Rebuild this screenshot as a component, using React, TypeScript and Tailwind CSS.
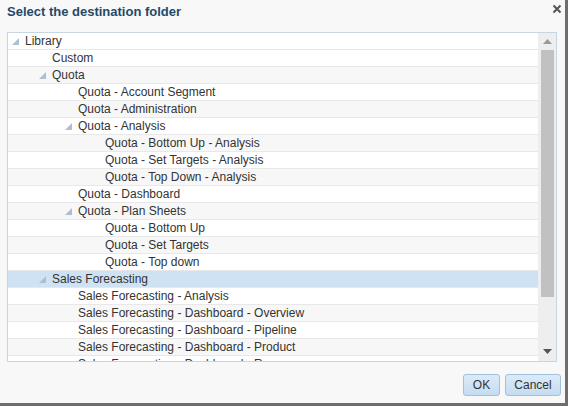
import React from "react";

type Row = { label: string; level: number; expanded?: boolean };

const rows: Row[] = [
  { label: "Library", level: 0, expanded: true },
  { label: "Custom", level: 1 },
  { label: "Quota", level: 1, expanded: true },
  { label: "Quota - Account Segment", level: 2 },
  { label: "Quota - Administration", level: 2 },
  { label: "Quota - Analysis", level: 2, expanded: true },
  { label: "Quota - Bottom Up - Analysis", level: 3 },
  { label: "Quota - Set Targets - Analysis", level: 3 },
  { label: "Quota - Top Down - Analysis", level: 3 },
  { label: "Quota - Dashboard", level: 2 },
  { label: "Quota - Plan Sheets", level: 2, expanded: true },
  { label: "Quota - Bottom Up", level: 3 },
  { label: "Quota - Set Targets", level: 3 },
  { label: "Quota - Top down", level: 3 },
  { label: "Sales Forecasting", level: 1, expanded: true },
  { label: "Sales Forecasting - Analysis", level: 2 },
  { label: "Sales Forecasting - Dashboard - Overview", level: 2 },
  { label: "Sales Forecasting - Dashboard - Pipeline", level: 2 },
  { label: "Sales Forecasting - Dashboard - Product", level: 2 },
  { label: "Sales Forecasting - Dashboard - Resources", level: 2 },
];

const levelPad = ["pl-[4px]", "pl-[31px]", "pl-[57px]", "pl-[84px]"];

function Tri() {
  return (
    <svg width="7" height="7" viewBox="0 0 7 7" className="block">
      <polygon points="7,0 7,7 0,7" fill="#aebfcf" />
    </svg>
  );
}

export default function App() {
  return (
    <div className="w-[568px] h-[406px] bg-[#6e6e6e] overflow-hidden" style={{ fontFamily: '"Liberation Sans", Arial, sans-serif' }}>
      <div className="w-[565px] h-[403px] bg-[#f8f8f8] flex flex-col">
        <div className="h-[32px] flex items-start justify-between">
          <div className="pl-[7px] pt-[4px] text-[13px] font-bold text-[#1f4a68] leading-[16px]">
            Select the destination folder
          </div>
          <div className="pr-[3px] pt-[3px]">
            <svg width="10" height="10" viewBox="0 0 10 10" className="block mt-[1px]">
              <path d="M1.5 1.5 L8.5 8.5 M8.5 1.5 L1.5 8.5" stroke="#555" strokeWidth="2" />
            </svg>
          </div>
        </div>
        <div className="ml-[7px] w-[550px] h-[330px] border border-[#c8d6e2] bg-white flex overflow-hidden">
          <div className="w-[530px] flex flex-col overflow-hidden">
            {rows.map((r, i) => {
              const bg =
                r.label === "Sales Forecasting"
                  ? "bg-[#cfe2f3]"
                  : i > 0 && i % 2 === 0
                  ? "bg-[#f7f7f7]"
                  : "bg-white";
              return (
                <div
                  key={i}
                  className={`h-[17px] shrink-0 box-border border-b border-[#e8e8e8] flex items-center pt-[1px] ${bg} ${levelPad[r.level]}`}
                >
                  <div className="w-[13px] shrink-0 flex items-center">{r.expanded ? <Tri /> : null}</div>
                  <span className="text-[12px] leading-[15px] text-[#333] whitespace-nowrap">{r.label}</span>
                </div>
              );
            })}
          </div>
          <div className="w-[18px] bg-[#eeeeee] flex flex-col items-center">
            <div className="h-[17px] flex items-center justify-center">
              <svg width="9" height="5" viewBox="0 0 9 5" className="block">
                <polygon points="4.5,0 9,5 0,5" fill="#9a9a9a" />
              </svg>
            </div>
            <div className="w-[13px] h-[247px] bg-[#c1c1c1]" />
            <div className="flex-1" />
            <div className="h-[20px] flex items-center justify-center">
              <svg width="9" height="5" viewBox="0 0 9 5" className="block">
                <polygon points="0,0 9,0 4.5,5" fill="#555" />
              </svg>
            </div>
          </div>
        </div>
        <div className="flex-1 flex items-start justify-end gap-[5px] pr-[4px] pt-[12px]">
          <button className="h-[22px] w-[37px] rounded-[3px] border border-[#9fc1de] bg-gradient-to-b from-[#dcebf8] to-[#c4dcf1] text-[12px] text-[#333]">
            OK
          </button>
          <button className="h-[22px] w-[56px] rounded-[3px] border border-[#9fc1de] bg-gradient-to-b from-[#dcebf8] to-[#c4dcf1] text-[12px] text-[#333]">
            Cancel
          </button>
        </div>
      </div>
    </div>
  );
}
